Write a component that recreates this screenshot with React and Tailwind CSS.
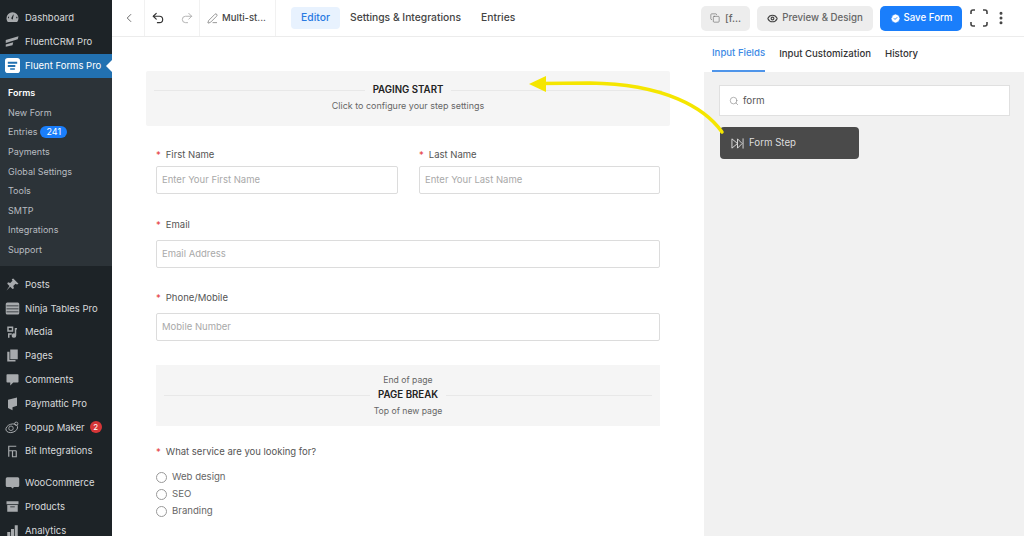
import React from "react";
import { ChevronLeft, Undo2, Redo2, PenLine, Copy, Eye, BadgeCheck, EllipsisVertical, Search } from "lucide-react";

const I = ({ children }) => (
  <svg viewBox="0 0 20 20" className="w-[15px] h-[15px] shrink-0" fill="#a7aaad">{children}</svg>
);

const icons = {
  dash: <path d="M10 3a8 8 0 0 0-8 8c0 2 .7 3.700 1.800 5h12.400A8 8 0 0 0 18 11a8 8 0 0 0-8-8zm0 9.500a1.500 1.500 0 0 1-1.200-2.400L11 6l.6.300-1 4.700a1.500 1.500 0 0 1-.6 1.500zM5 11H4V9h1.500zm10 0v-2h1.500v2z" />,
  crm: <path d="M1 8l17-5-1 4L1 12zM1 14l10-3-1 4-9 2z" />,
  posts: <path d="M11 2l7 7-2 1-2-1-3 3 1 3-2 1-3-3-5 5 4-6-3-3 1-2 3 1 3-3-1-2z" />,
  ninja: <path d="M3 2h14a2 2 0 0 1 2 2v12a2 2 0 0 1-2 2H3a2 2 0 0 1-2-2V4a2 2 0 0 1 2-2zm-1 4v1h16V6zm0 4v1h16v-1zm0 4v1h16v-1z" />,
  media: <path d="M3 2h8v7H3zm2 2v3h4V4zM4 11h5v2H6v4H4zm9-7h3v2h-1v8a3 3 0 1 1-2-2.800z" />,
  pages: <path d="M7 2h10v13H7zM3 5h3v11h8v2H3z" />,
  comments: <path d="M3 3h14a1 1 0 0 1 1 1v9a1 1 0 0 1-1 1h-6l-4 4v-4H3a1 1 0 0 1-1-1V4a1 1 0 0 1 1-1z" />,
  paymattic: <path d="M4 5l12-3v11l-6 2v4l-6-3z" />,
  popup: (
    <g fill="none" stroke="#a7aaad" strokeWidth="1.200">
      <ellipse cx="9" cy="11" rx="8" ry="5.500" transform="rotate(-18 9 11)" />
      <circle cx="8" cy="11" r="3" />
      <circle cx="15" cy="5" r="2.200" />
    </g>
  ),
  bit: (
    <g fill="none" stroke="#a7aaad" strokeWidth="1.600">
      <path d="M15 3H5v14M5 9h10M10 9v8h5v-8" />
    </g>
  ),
  woo: <path d="M3 3h14a2 2 0 0 1 2 2v9a2 2 0 0 1-2 2h-5l-2 2-2-2H3a2 2 0 0 1-2-2V5a2 2 0 0 1 2-2z" />,
  products: <path d="M2 3h16v4H2zm1 5h14v9H3zm4 2v1h6v-1z" />,
  analytics: <path d="M3 12h4v8H3zM8 8h4v12H8zM13 3h4v17h-4z" />,
};

const Item = ({ icon, label, children }) => (
  <div className="h-[23.800px] flex items-center pl-[5px] gap-[5px] text-[#d8dadc] shrink-0">
    <I>{icons[icon]}</I>
    <span className="pt-[1px]">{label}</span>
    {children}
  </div>
);

const Sub = ({ children, bold }) => (
  <div className={`h-[19.600px] flex items-center pl-[8px] pt-[1px] gap-[3px] text-[9px] ${bold ? "font-semibold text-white" : "text-[#b8bcc0]"}`}>{children}</div>
);

const Sidebar = () => (
  <aside className="w-[112px] h-full shrink-0 bg-[#1d2327] text-[9.500px] overflow-hidden flex flex-col pt-[6px]">
    <Item icon="dash" label="Dashboard" />
    <Item icon="crm" label="FluentCRM Pro" />
    <div className="relative h-[24px] bg-[#2271b1] flex items-center pl-[5px] gap-[5px] text-white shrink-0">
      <svg viewBox="0 0 16 16" className="w-[15px] h-[15px] shrink-0">
        <rect width="16" height="16" rx="3" fill="#fff" />
        <path d="M3 4h10v2H3zM3 7.500h8v2H3zM5.500 11h5v1.500h-5z" fill="#2271b1" />
      </svg>
      <span className="pt-[1px]">Fluent Forms Pro</span>
      <div className="absolute right-0 top-[6px] w-0 h-0 border-y-[6px] border-y-transparent border-r-[6px] border-r-white" />
    </div>
    <div className="bg-[#2c3338] h-[188px] pt-[5px] shrink-0">
      <Sub bold>Forms</Sub>
      <Sub>New Form</Sub>
      <Sub>
        Entries
        <span className="bg-[#1a7efb] rounded-full text-white text-[9px] px-[6px] leading-[12px]">241</span>
      </Sub>
      <Sub>Payments</Sub>
      <Sub>Global Settings</Sub>
      <Sub>Tools</Sub>
      <Sub>SMTP</Sub>
      <Sub>Integrations</Sub>
      <Sub>Support</Sub>
    </div>
    <div className="h-[7px] shrink-0" />
    <Item icon="posts" label="Posts" />
    <Item icon="ninja" label="Ninja Tables Pro" />
    <Item icon="media" label="Media" />
    <Item icon="pages" label="Pages" />
    <Item icon="comments" label="Comments" />
    <Item icon="paymattic" label="Paymattic Pro" />
    <Item icon="popup" label="Popup Maker">
      <span className="w-[12px] h-[12px] rounded-full bg-[#d63638] text-white text-[8px] flex items-center justify-center">2</span>
    </Item>
    <Item icon="bit" label="Bit Integrations" />
    <div className="h-[8px] shrink-0" />
    <Item icon="woo" label="WooCommerce" />
    <Item icon="products" label="Products" />
    <Item icon="analytics" label="Analytics" />
  </aside>
);

const TopBar = () => (
  <header className="h-[37px] shrink-0 border-b border-[#ececec] flex items-center text-[10.300px] text-[#444]">
    <div className="w-[33px] h-full border-r border-[#f1f1f1] flex items-center justify-center pl-[2px]">
      <ChevronLeft size={14} strokeWidth={1.500} color="#555" />
    </div>
    <div className="w-[55px] h-full border-r border-[#f1f1f1] flex items-center justify-between pl-[6px] pr-[5px]">
      <Undo2 size={14} strokeWidth={2} color="#333" />
      <Redo2 size={14} strokeWidth={1.500} color="#aaa" />
    </div>
    <div className="w-[76px] h-full border-r border-[#f1f1f1] flex items-center pl-[7px] gap-[4px]">
      <PenLine size={11} strokeWidth={1.300} color="#555" />
      <span className="font-medium text-[9.500px]">Multi-st...</span>
    </div>
    <div className="ml-[15px] w-[49px] h-[22px] rounded-[4px] bg-[#e8f2fe] text-[#2a7ae2] font-medium flex items-center justify-center">Editor</div>
    <span className="ml-[10px] font-medium">Settings &amp; Integrations</span>
    <span className="ml-[20px] font-medium">Entries</span>
    <div className="ml-auto flex items-center text-[9.700px]">
      <div className="w-[49px] h-[25px] rounded-[5px] bg-[#ededed] flex items-center justify-center gap-[5px] text-[#666] font-medium">
        <Copy size={10} strokeWidth={1.500} /> <span className="text-[10px]">[f...</span>
      </div>
      <div className="ml-[7px] w-[116px] h-[25px] rounded-[5px] bg-[#ededed] flex items-center justify-center gap-[4px] text-[#666] font-medium">
        <Eye size={11} strokeWidth={2.500} color="#444" /> <span>Preview &amp; Design</span>
      </div>
      <div className="ml-[7px] w-[82px] h-[25px] rounded-[5px] bg-[#1a7efb] flex items-center justify-center gap-[3px] text-white font-medium">
        <BadgeCheck size={11} fill="#fff" color="#1a7efb" /> <span>Save Form</span>
      </div>
      <svg viewBox="0 0 18 18" className="ml-[8px] w-[18px] h-[18px]" fill="none" stroke="#444" strokeWidth="1.600">
        <path d="M1 5V3a2 2 0 0 1 2-2h2M13 1h2a2 2 0 0 1 2 2v2M17 13v2a2 2 0 0 1-2 2h-2M5 17H3a2 2 0 0 1-2-2v-2" />
      </svg>
      <EllipsisVertical size={16} strokeWidth={2.500} color="#444" className="ml-[5px] mr-[15px]" />
    </div>
  </header>
);

const Star = () => <span className="text-[#e53e3e] mr-[5px] text-[9.500px]">*</span>;

const Label = ({ children }) => (
  <div className="text-[9.500px] text-[#555] h-[16px] flex items-center"><Star />{children}</div>
);

const Field = ({ label, placeholder, className = "", gap = "mt-[7px]" }) => (
  <div className={className}>
    <Label>{label}</Label>
    <div className={`${gap} h-[28px] border border-[#dcdcdc] rounded-[2px] flex items-center pl-[5px] text-[9.500px] text-[#a9a9a9]`}>{placeholder}</div>
  </div>
);

const Divider = ({ children }) => (
  <div className="flex items-center gap-[8px]">
    <div className="flex-1 h-px bg-[#e8e8e8]" />
    <span className="text-[9.700px] font-semibold text-[#222]">{children}</span>
    <div className="flex-1 h-px bg-[#e8e8e8]" />
  </div>
);

const Radio = ({ label }) => (
  <div className="h-[17px] flex items-center gap-[5px] text-[9.600px] text-[#666]">
    <span className="w-[11px] h-[11px] rounded-full border border-[#999] bg-white" />
    {label}
  </div>
);

const Canvas = () => (
  <main className="w-[592px] shrink-0 pt-[34px] pl-[34px] overflow-hidden">
    <div className="w-[524px] h-[55px] bg-[#f5f5f5] rounded-[2px] px-[8px] pt-[12px] text-center">
      <Divider>PAGING START</Divider>
      <div className="mt-[1px] text-[8.950px] text-[#666]">Click to configure your step settings</div>
    </div>
    <div className="ml-[10px] w-[504px]">
      <div className="mt-[21px] flex gap-[21px]">
        <Field className="w-[242px]" gap="mt-[3px]" label="First Name" placeholder="Enter Your First Name" />
        <Field className="w-[241px]" gap="mt-[3px]" label="Last Name" placeholder="Enter Your Last Name" />
      </div>
      <Field className="mt-[23px]" label="Email" placeholder="Email Address" />
      <Field className="mt-[22px]" label="Phone/Mobile" placeholder="Mobile Number" />
      <div className="mt-[24px] h-[61px] bg-[#f5f5f5] px-[8px] pt-[9px] text-center text-[8.650px] text-[#666]">
        <div className="leading-[13px]">End of page</div>
        <div className="mt-[1px]"><Divider>PAGE BREAK</Divider></div>
        <div className="mt-[2px] leading-[13px]">Top of new page</div>
      </div>
      <div className="mt-[18px]"><Label>What service are you looking for?</Label></div>
      <div className="mt-[9px]">
        <Radio label="Web design" />
        <Radio label="SEO" />
        <Radio label="Branding" />
      </div>
    </div>
  </main>
);

const Panel = () => (
  <section className="flex-1 bg-[#f1f1f1]">
    <div className="h-[35px] bg-white flex pl-[8px] gap-[14px] text-[9.600px] font-medium text-[#333]">
      <div className="h-full border-b-2 border-[#4f95ea] text-[#3d8ae5] flex items-center">Input Fields</div>
      <div className="flex items-center">Input Customization</div>
      <div className="flex items-center">History</div>
    </div>
    <div className="mt-[13px] ml-[15px] w-[291px] h-[31px] bg-white border border-[#e0e0e0] flex items-center pl-[9px] gap-[4px] text-[9.800px] text-[#555]">
      <Search size={10} strokeWidth={1.500} color="#888" /> <span className="pt-[2px]">form</span>
    </div>
    <div className="mt-[11px] ml-[16px] w-[139px] h-[32px] bg-[#4a4a4a] rounded-[4px] flex items-center pl-[11px] gap-[5px] text-[9.700px] text-[#ddd]">
      <svg viewBox="0 0 14 14" className="w-[13px] h-[13px]" fill="none" stroke="#ddd" strokeWidth="1">
        <path d="M1 2l6 5-6 5zM7 2l5 5-5 5zM13 1.500v11" />
      </svg>
      <span className="pt-[1px]">Form Step</span>
    </div>
  </section>
);

export default function App() {
  return (
    <div className="relative w-[1024px] h-[536px] flex bg-white overflow-hidden font-['Inter',sans-serif]">
      <Sidebar />
      <div className="flex-1 flex flex-col min-w-0">
        <TopBar />
        <div className="flex flex-1 min-h-0">
          <Canvas />
          <Panel />
        </div>
      </div>
      <svg className="absolute left-0 top-0 pointer-events-none" width="1024" height="536" viewBox="0 0 1024 536">
        <path d="M722 132C705 108 665 84 590 83L540 83.500" fill="none" stroke="#f5e600" strokeWidth="3.500" strokeLinecap="round" />
        <path d="M529 84L546 76V92Z" fill="#f5e600" />
      </svg>
    </div>
  );
}
